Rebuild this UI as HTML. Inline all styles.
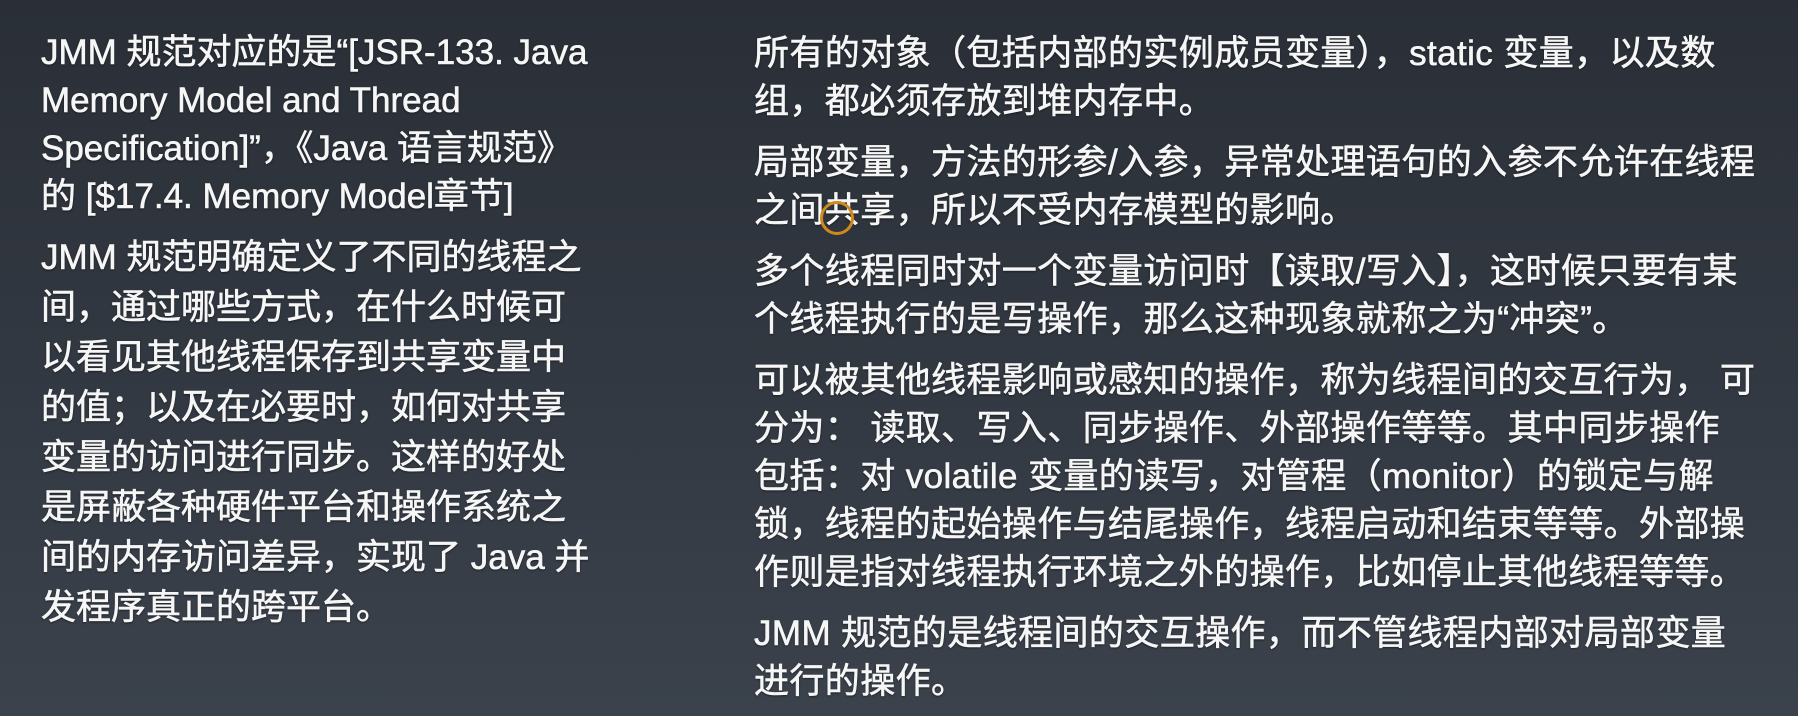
<!DOCTYPE html>
<html><head><meta charset="utf-8"><style>
html,body{margin:0;padding:0}
body{width:1798px;height:716px;overflow:hidden;position:relative;
background:linear-gradient(180deg,#2a2f37 0%,#323841 50%,#3b424c 100%);
font-family:"Liberation Sans","Noto Sans CJK SC",sans-serif;color:#f6f6f6;font-size:35px;
-webkit-text-stroke:0.6px #f6f6f6;
text-shadow:0 1px 2px rgba(0,0,0,.6)}
.l{position:absolute;white-space:nowrap;line-height:48px}
p{margin:0}
</style></head><body>
<div class="l" style="left:41px;top:29px">
<p>JMM 规范对应的是“[JSR-133. Java<br>Memory Model and Thread<br>Specification]”，《Java 语言规范》<br>的 [$17.4. Memory Model章节]</p>
<p style="margin-top:12px;line-height:50px">JMM 规范明确定义了不同的线程之<br>间，通过哪些方式，在什么时候可<br>以看见其他线程保存到共享变量中<br>的值；以及在必要时，如何对共享<br>变量的访问进行同步。这样的好处<br>是屏蔽各种硬件平台和操作系统之<br>间的内存访问差异，实现了 Java 并<br>发程序真正的跨平台。</p>
</div>
<div class="l" style="left:754px;top:30px;letter-spacing:0.4px">
<p>所有的对象（包括内部的实例成员变量），static 变量，以及数<br>组，都必须存放到堆内存中。</p>
<p style="margin-top:13px">局部变量，方法的形参/入参，异常处理语句的入参不允许在线程<br>之间共享，所以不受内存模型的影响。</p>
<p style="margin-top:13px">多个线程同时对一个变量访问时【读取/写入】，这时候只要有某<br>个线程执行的是写操作，那么这种现象就称之为“冲突”。</p>
<p style="margin-top:13px">可以被其他线程影响或感知的操作，称为线程间的交互行为， 可<br>分为： 读取、写入、同步操作、外部操作等等。其中同步操作<br>包括：对 volatile 变量的读写，对管程（monitor）的锁定与解<br>锁，线程的起始操作与结尾操作，线程启动和结束等等。外部操<br>作则是指对线程执行环境之外的操作，比如停止其他线程等等。</p>
<p style="margin-top:13px">JMM 规范的是线程间的交互操作，而不管线程内部对局部变量<br>进行的操作。</p>
</div>
<div style="position:absolute;left:820px;top:201px;width:34px;height:34px;border:3px solid #d08a1c;border-radius:50%;box-sizing:border-box"></div>
</body></html>
